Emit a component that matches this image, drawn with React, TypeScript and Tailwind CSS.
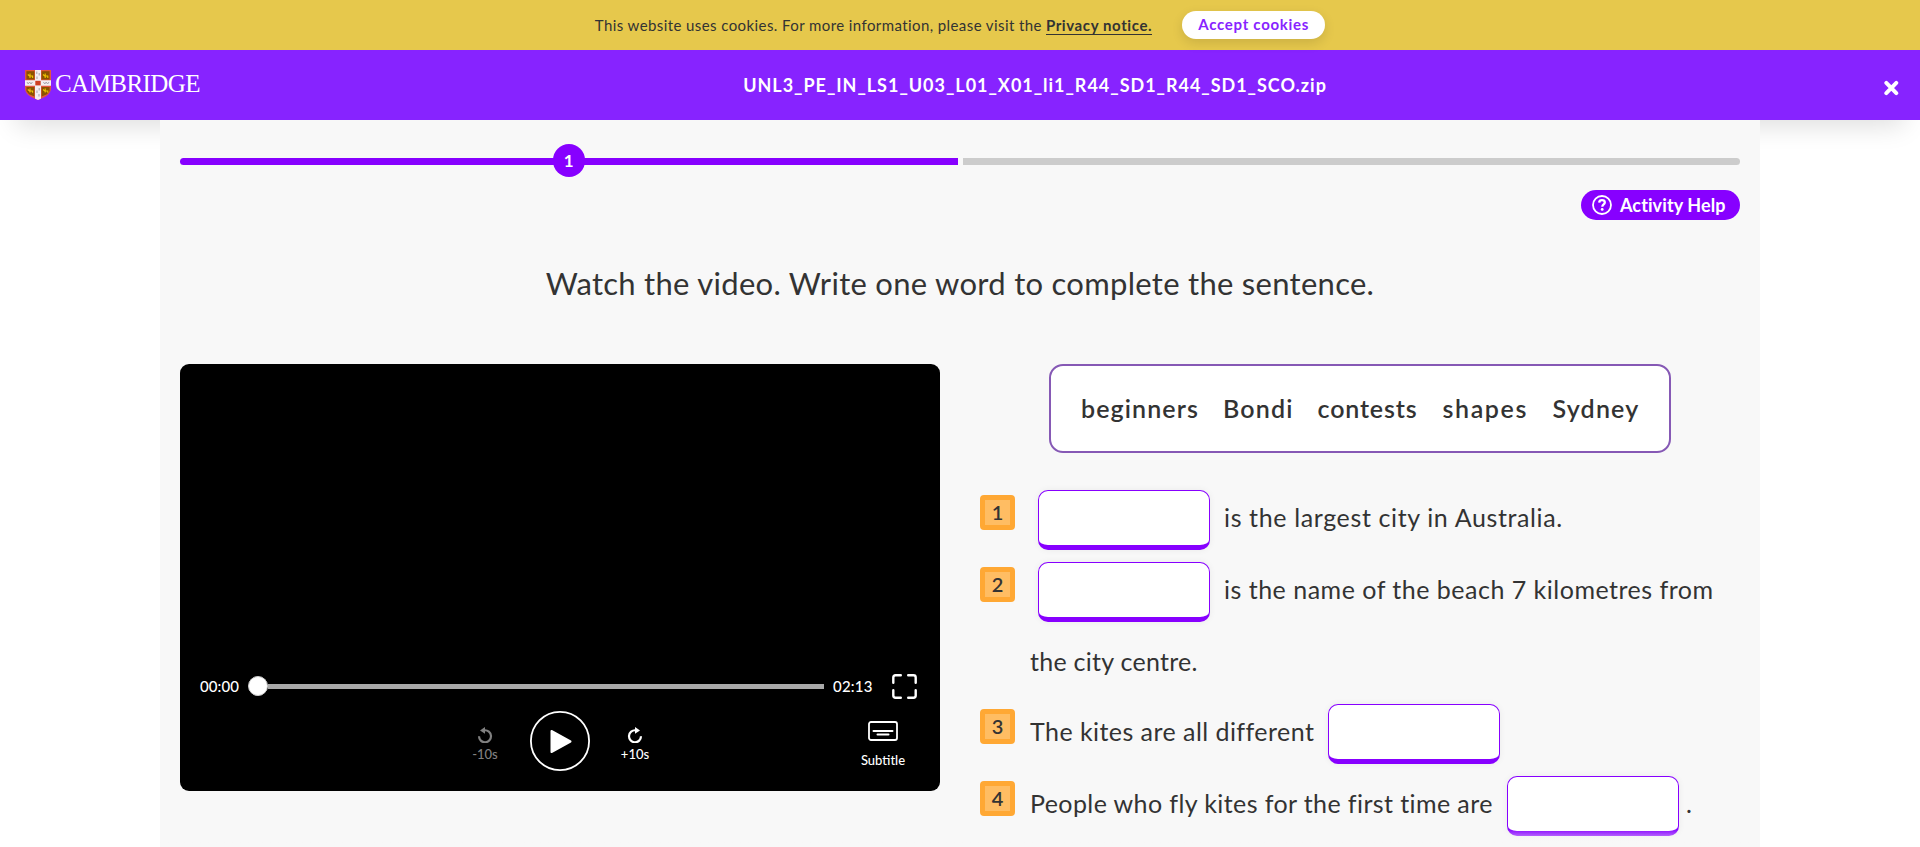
import React from 'react';

function Shield() {
  return (
    <svg width="26" height="30" viewBox="0 0 26 30" className="shrink-0" aria-hidden="true">
      <defs>
        <clipPath id="shield">
          <path d="M0 0H26V18C26 25 19 27.5 13 30C7 27.5 0 25 0 18Z" />
        </clipPath>
      </defs>
      <g clipPath="url(#shield)">
        <rect width="26" height="30" fill="#e2553f" />
        <rect x="1.4" y="1.2" width="8" height="8.3" fill="#8a5200" />
        <rect x="16.6" y="1.2" width="8" height="8.3" fill="#8a5200" />
        <path d="M1.4 17H9.4V26.5L4 24.3L1.4 21Z" fill="#8a5200" />
        <path d="M24.6 17H16.6V26.5L22 24.3L24.6 21Z" fill="#8a5200" />
        <g fill="none" stroke="#f0c400" strokeWidth="1.1">
          <path d="M2.8 4.5L4.5 6H7.8M5 3.5V8M7.6 5.5V8" />
          <path d="M18 4.5L19.7 6H23M20.2 3.5V8M22.8 5.5V8" />
          <path d="M2.8 19.5L4.5 21H7.8M5 18.5V22.6M7.6 20.5V22.8" />
          <path d="M18 19.5L19.7 21H23M20.2 18.5V22.6M22.8 20.5V22.8" />
        </g>
        <path d="M10 0H16V10.3H26V15.8H16V30H10V15.8H0V10.3H10Z" fill="#f4eef2" />
        <g stroke="#a9a3ab" strokeWidth="1" fill="none">
          <path d="M11.8 1.5V4M14.2 3V5.5M12 6.5V9M14.2 18V20.5M12 20.5V23M14 24V26.5" />
          <path d="M2 12L3.2 14L4.6 12L6 14L7.4 12M18.4 12L19.8 14L21.2 12L22.6 14L24 12" />
        </g>
        <rect x="10.3" y="10.8" width="5.4" height="4.6" fill="#cf3f22" />
      </g>
    </svg>
  );
}

function Replay({ forward = false }: { forward?: boolean }) {
  return (
    <svg width="16" height="16" viewBox="0 0 16 16" className={forward ? '' : '-scale-x-100'} aria-hidden="true">
      <path d="M8.6 3.3A6 6 0 1 0 14 9.3" fill="none" stroke="currentColor" strokeWidth="2.2" />
      <path d="M8 0L13 3.4L8 6.8Z" fill="currentColor" />
    </svg>
  );
}

function Badge({ n }: { n: number }) {
  return (
    <div className="mt-[11px] mr-[15px] flex h-[35px] w-[35px] shrink-0 items-center justify-center rounded-[4px] border-[5px] border-[#ffa834] bg-[#ffbd63] text-[20px] leading-[25px] font-semibold">
      {n}
    </div>
  );
}

function Blank({ className = '' }: { className?: string }) {
  return (
    <input
      className={`mt-[6px] h-[60px] w-[172px] shrink-0 rounded-[10px] border border-b-[5px] border-[#8700ff] bg-white shadow-[0_0_7px_rgba(0,0,0,0.06)] ${className}`}
    />
  );
}

export default function App() {
  return (
    <div className="h-[847px] overflow-hidden bg-white font-[Lato,sans-serif] text-[#333]">
      <div className="flex h-[50px] items-center justify-center bg-[#e6c84c] text-[15px] leading-[18px]">
        <span className="mr-[4px] pb-px tracking-[0.412px] whitespace-nowrap">
          This website uses cookies. For more information, please visit the
        </span>
        <a className="border-b border-[#333] font-bold tracking-[0.6px] whitespace-nowrap">Privacy notice.</a>
        <button className="ml-[30px] h-7 w-[143px] rounded-full bg-white pb-[2px] font-bold tracking-[0.72px] text-[#8723ff] shadow-[0_4px_12px_rgba(0,0,0,0.12)]">
          Accept cookies
        </button>
      </div>

      <header className="flex h-[70px] items-center bg-[#8723ff] text-white shadow-[0_22px_26px_-16px_rgba(0,0,0,0.13)]">
        <div className="flex w-[202px] shrink-0 items-center gap-[4px] pl-[25px]">
          <Shield />
          <span className="pb-[3px] font-['Liberation_Serif',serif] text-[25px] leading-[30px] tracking-[-0.55px]">
            CAMBRIDGE
          </span>
        </div>
        <h1 className="flex-1 text-center text-[18px] leading-6 font-bold tracking-[0.976px]">
          UNL3_PE_IN_LS1_U03_L01_X01_li1_R44_SD1_R44_SD1_SCO.zip
        </h1>
        <button className="flex w-[52px] shrink-0 justify-start pt-[5px] pl-4" aria-label="Close">
          <svg width="15" height="16" viewBox="0 0 15 16">
            <path d="M2.3 2.8L12.3 13.2M12.3 2.8L2.3 13.2" stroke="#fff" strokeWidth="3.9" strokeLinecap="round" />
          </svg>
        </button>
      </header>

      <main className="relative mx-auto h-[727px] w-[1600px] bg-[#f8f8f8] px-5 pt-[38px]">
        <div className="flex h-[7px] gap-[5px]">
          <div className="relative h-full flex-1 rounded-l-full bg-[#8700ff]">
            <div className="absolute -top-[14px] left-1/2 flex h-[33px] w-8 -translate-x-1/2 items-center justify-center rounded-full bg-[#8700ff] text-[17px] leading-none font-bold text-white">
              1
            </div>
          </div>
          <div className="h-full flex-1 rounded-r-full bg-[#ccc]" />
        </div>

        <div className="mt-[25px] flex justify-end">
          <button className="flex h-[30px] w-[159px] items-center rounded-full bg-[#8700ff] pt-px pl-[11px] text-[18px] font-bold tracking-[0.1px] whitespace-nowrap text-white">
            <svg width="20" height="20" viewBox="0 0 20 20" className="mr-2 mb-px shrink-0" fill="none" stroke="#fff">
              <circle cx="10" cy="10" r="9" strokeWidth="1.8" />
              <path d="M7.2 7.6C7.3 5.9 8.6 5.2 10 5.2C11.6 5.2 12.8 6.1 12.8 7.5C12.8 9.5 10.3 9.4 10.3 11.8" strokeWidth="2.3" />
              <circle cx="10.2" cy="14.4" r="1.4" fill="#fff" stroke="none" />
            </svg>
            Activity Help
          </button>
        </div>

        <h2 className="mt-[42px] mb-[60px] text-center text-[31px] leading-[42px] tracking-[0.285px]">
          Watch the video. Write one word to complete the sentence.
        </h2>

        <div className="flex items-start gap-10">
          <section className="flex h-[427px] w-[760px] shrink-0 flex-col justify-end rounded-[9px] bg-black pb-5 text-white">
            <div className="mb-3 flex h-[26px] items-center pl-5 text-[15px] font-medium">
              <span className="w-[48px] tracking-[0.1px]">00:00</span>
              <div className="flex w-[576px] items-center">
                <div className="h-5 w-5 rounded-full border border-[#ccc] bg-white" />
                <div className="h-[5px] flex-1 bg-[#a9a9a9]" />
              </div>
              <span className="ml-[9px] w-[59px] tracking-[0.2px]">02:13</span>
              <svg width="25" height="25" viewBox="0 0 25 25" fill="none" stroke="#fff" strokeWidth="2.4" strokeLinecap="round">
                <path d="M1.3 8.8V3.5Q1.3 1.3 3.5 1.3H8.8M16.2 1.3H21.5Q23.7 1.3 23.7 3.5V8.8M23.7 16.2V21.5Q23.7 23.7 21.5 23.7H16.2M8.8 23.7H3.5Q1.3 23.7 1.3 21.5V16.2" />
              </svg>
            </div>
            <div className="grid h-[60px] grid-cols-[1fr_60px_1fr] text-[13px] leading-4 font-medium">
              <div className="flex justify-end pt-4 pr-[31px]">
                <div className="flex w-7 flex-col items-center gap-[3px] text-[#808080]">
                  <Replay />
                  <span>-10s</span>
                </div>
              </div>
              <svg width="60" height="60" viewBox="0 0 60 60">
                <circle cx="30" cy="30" r="29.1" fill="none" stroke="#fff" strokeWidth="1.8" />
                <path d="M21.5 20L40.5 30.5L21.5 41Z" fill="#fff" stroke="#fff" strokeWidth="2" strokeLinejoin="round" />
              </svg>
              <div className="flex justify-between pr-[34px] pl-[31px]">
                <div className="flex w-7 flex-col items-center gap-[3px] pt-4">
                  <Replay forward />
                  <span>+10s</span>
                </div>
                <div className="flex w-[46px] flex-col items-center gap-[11px] pt-[10px]">
                  <svg width="30" height="20" viewBox="0 0 30 20" fill="none" stroke="#fff">
                    <rect x="1" y="1" width="28" height="18" rx="2" strokeWidth="1.8" />
                    <path d="M5.5 10H24.5M9.5 13.5H20.5" strokeWidth="2" strokeLinecap="round" />
                  </svg>
                  <span>Subtitle</span>
                </div>
              </div>
            </div>
          </section>

          <section className="w-[780px] text-[25px] leading-[66px]">
            <div className="mb-[31px] ml-[69px] grid h-[89px] w-[622px] grid-cols-[142px_94.5px_125px_110px_auto] items-center rounded-[14px] border-2 border-[#8659b5] bg-white pb-px pl-[30px] leading-[30px] font-semibold">
              <span className="tracking-[1.1px]">beginners</span>
              <span className="tracking-[1.15px]">Bondi</span>
              <span className="tracking-[0.85px]">contests</span>
              <span className="tracking-[1.6px]">shapes</span>
              <span className="tracking-[1.2px]">Sydney</span>
            </div>

            <div className="flex h-[72px] items-start whitespace-nowrap">
              <Badge n={1} />
              <Blank className="ml-2" />
              <span className="ml-[14px] tracking-[0.63px]">is the largest city in Australia.</span>
            </div>
            <div className="flex h-[142px] items-start whitespace-nowrap">
              <Badge n={2} />
              <div>
                <div className="flex h-[72px] items-start">
                  <Blank className="ml-2" />
                  <span className="ml-[14px] tracking-[0.497px]">is the name of the beach 7 kilometres from</span>
                </div>
                <p className="tracking-[0.27px]">the city centre.</p>
              </div>
            </div>
            <div className="flex h-[72px] items-start whitespace-nowrap">
              <Badge n={3} />
              <span className="w-[298px] tracking-[0.448px]">The kites are all different</span>
              <Blank />
            </div>
            <div className="flex h-[72px] items-start whitespace-nowrap">
              <Badge n={4} />
              <span className="w-[477px] tracking-[0.4px]">People who fly kites for the first time are</span>
              <Blank />
              <span className="ml-[7px]">.</span>
            </div>
          </section>
        </div>

        <div className="absolute inset-x-0 bottom-0 h-[18px] bg-linear-to-b from-[#f8f8f8]/0 to-[#f8f8f8]" />
      </main>
    </div>
  );
}
